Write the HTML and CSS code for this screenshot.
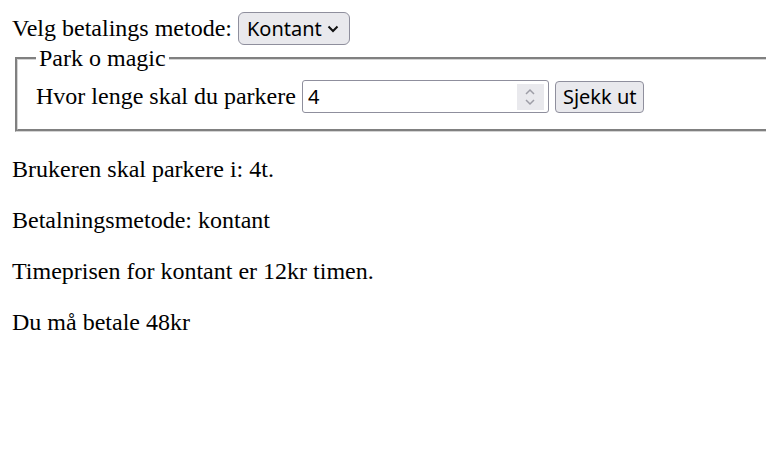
FILE: index.html
```html
<!DOCTYPE html>
<html lang="no">
<head>
  <meta charset="UTF-8" />
  <title>Parkering</title>
  <link rel="stylesheet" href="styles.css">
</head>
<body>
  <div class="pay-row">
    <label for="metode">Velg betalings metode:</label>
    <span class="select-wrap">
      <select id="metode" class="pay-select">
        <option>Kontant</option>
        <option>Kort</option>
      </select>
      <svg class="select-arrow" width="12" height="8" viewBox="0 0 12 8"><path d="M1.5 1.5 L6 6 L10.5 1.5" /></svg>
    </span>
  </div>

  <fieldset class="park-box">
    <legend>Park o magic</legend>
    <label for="timer">Hvor lenge skal du parkere</label>
    <span class="num-field">
      <input type="number" id="timer" class="num-input" value="4" />
      <span class="spin">
        <svg width="10" height="18" viewBox="0 0 10 18"><path d="M1 6 L5 2 L9 6" /><path d="M1 12 L5 16 L9 12" /></svg>
      </span>
    </span>
    <button class="check-btn">Sjekk ut</button>
  </fieldset>

  <p>Brukeren skal parkere i: 4t.</p>
  <p>Betalningsmetode: kontant</p>
  <p>Timeprisen for kontant er 12kr timen.</p>
  <p>Du må betale 48kr</p>
</body>
</html>
```

FILE: styles.css
```css
html {
  overflow: hidden;
}

body {
  margin: 12px 0 12px 12px;
  font-family: "Liberation Serif", "Times New Roman", serif;
  font-size: 24px;
  color: #000;
  background: #fff;
}

.pay-row {
  white-space: nowrap;
}

.select-wrap {
  position: relative;
  display: inline-block;
}

.pay-select {
  appearance: none;
  -webkit-appearance: none;
  box-sizing: border-box;
  height: 33px;
  width: 112px;
  padding: 0 16px 0 8px;
  font-family: "Noto Sans", sans-serif;
  font-size: 20px;
  color: #000;
  background: #e9e9ed;
  border: 1px solid #8f8f9d;
  border-radius: 6px;
}

/* chevron drawn over the native select */
.select-arrow {
  position: absolute;
  right: 11px;
  top: 13px;
  pointer-events: none;
  fill: none;
  stroke: #111;
  stroke-width: 2;
}

/* runs off the right edge, so no right border */
.park-box {
  margin: 0 0 0 3px;
  padding: 8px 18px 16px;
  border: 3px groove #d4d4d4;
  border-right: none;
  white-space: nowrap;
}

.park-box legend {
  padding: 0 3px;
}

.num-field {
  display: inline-flex;
  align-items: center;
  box-sizing: border-box;
  width: 247px;
  height: 33px;
  padding: 0 4px 0 5px;
  border: 1px solid #8f8f9d;
  border-radius: 3px;
  background: #fff;
}

.num-input {
  flex: 1;
  min-width: 0;
  height: 100%;
  padding: 0;
  border: none;
  outline: none;
  background: transparent;
  font-family: "Noto Sans", sans-serif;
  font-size: 20px;
  color: #000;
}

.num-input::-webkit-inner-spin-button,
.num-input::-webkit-outer-spin-button {
  -webkit-appearance: none;
  margin: 0;
}

.spin {
  display: flex;
  align-items: center;
  justify-content: center;
  width: 27px;
  height: 26px;
  background: #e9e9ed;
}

.spin svg {
  fill: none;
  stroke: #9d9da6;
  stroke-width: 1.5;
}

.check-btn {
  box-sizing: border-box;
  height: 32px;
  padding: 0 7px;
  font-family: "Noto Sans", sans-serif;
  font-size: 20px;
  color: #000;
  background: #e9e9ed;
  border: 1px solid #8f8f9d;
  border-radius: 4px;
}
```
